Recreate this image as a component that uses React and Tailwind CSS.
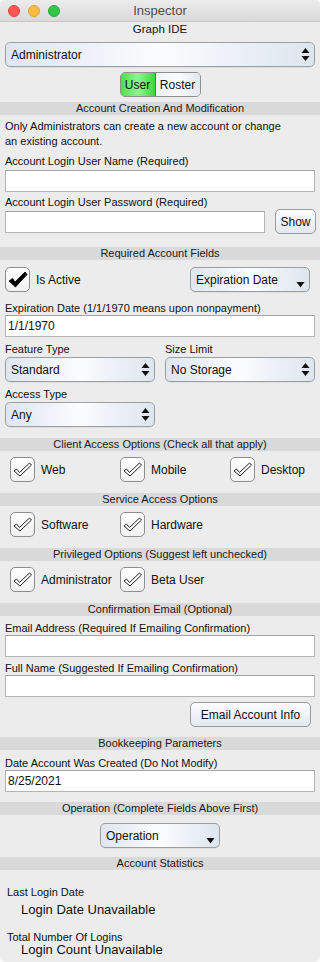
import React from 'react';

const FONT = { fontFamily: '"Liberation Sans", Arial, sans-serif' };

function UpDown() {
  return (
    <svg width="9" height="15" viewBox="0 0 9 15" className="shrink-0">
      <path d="M4.5 1 L8.5 6 L0.5 6 Z" fill="#111" />
      <path d="M0.5 9 L8.5 9 L4.5 14 Z" fill="#111" />
    </svg>
  );
}

function DownArrow() {
  return (
    <svg width="9" height="7" viewBox="0 0 9 7" className="shrink-0 mt-[9px]">
      <path d="M0.5 1 L8.5 1 L4.5 6.5 Z" fill="#111" />
    </svg>
  );
}

// popup button (up/down arrows) and pull-down (single arrow)
function Popup({ label, className = '', pulldown = false }) {
  return (
    <div
      className={`flex items-center justify-between h-[25px] rounded-[5px] border border-[#9d9d9d] bg-gradient-to-r from-[#dfe6f0] via-[#fbfcfe] to-[#dde5ef] pl-[5px] pr-[4px] shadow-[0_1px_0_rgba(0,0,0,0.05)] ${className}`}
    >
      <span className="text-[12px] text-[#111] leading-none">{label}</span>
      {pulldown ? <DownArrow /> : <UpDown />}
    </div>
  );
}

function Band({ children, className = '' }) {
  return (
    <div className={`-mx-[5px] h-[13px] bg-[#d9d9d9] text-center text-[11px] leading-[13px] text-[#1a1a1a] ${className}`}>
      {children}
    </div>
  );
}

function Label({ children, className = '' }) {
  return <div className={`text-[11px] leading-[14px] text-[#111] ${className}`}>{children}</div>;
}

function Input({ value = '', className = '' }) {
  return (
    <div className={`h-[22px] bg-white border border-[#b4b4b4] border-t-[#a4a4a4] pl-[2px] text-[12px] leading-[20px] text-[#111] ${className}`}>
      {value}
    </div>
  );
}

function Check({ filled = false }) {
  return (
    <div className="w-[25px] h-[25px] shrink-0 rounded-[5px] border border-[#8e8e8e] bg-gradient-to-b from-white to-[#f1f1f1] flex items-center justify-center">
      <svg width="21" height="19" viewBox="0 0 21 19">
        {filled ? (
          <path d="M2 11 L5.5 8.5 L8 12 L18 2 L20 4.5 L8.5 17 Z" fill="#000" stroke="#000" strokeWidth="0.8" strokeLinejoin="round" />
        ) : (
          <path d="M2 11 L4.5 9 L7.5 12.5 L17.5 3 L19.5 5 L8 16 Z" fill="#fff" stroke="#222" strokeWidth="1" strokeLinejoin="round" />
        )}
      </svg>
    </div>
  );
}

function CheckItem({ label, filled, className = '' }) {
  return (
    <div className={`flex items-center gap-[6px] ${className}`}>
      <Check filled={filled} />
      <span className="text-[12px] text-[#111]">{label}</span>
    </div>
  );
}

function Button({ children, className = '' }) {
  return (
    <div className={`h-[25px] rounded-[5px] border border-[#9a9a9a] bg-gradient-to-b from-[#fbfcfd] to-[#e3e9f1] flex items-center justify-center text-[12px] text-[#111] ${className}`}>
      {children}
    </div>
  );
}

export default function App() {
  return (
    <div style={FONT} className="w-[320px] h-[962px] bg-[#ececec] overflow-hidden rounded-[5px]">
      {/* Title bar */}
      <div className="relative h-[22px] bg-gradient-to-b from-[#ececec] to-[#d9d9d9] border-b border-[#c6c6c6] flex items-center justify-center">
        <div className="absolute left-[8px] top-[5px] flex gap-[8px]">
          <span className="w-[12px] h-[12px] rounded-full bg-[#fc5753] border border-[#df4744]" />
          <span className="w-[12px] h-[12px] rounded-full bg-[#fdbc40] border border-[#de9f34]" />
          <span className="w-[12px] h-[12px] rounded-full bg-[#33c748] border border-[#27aa35]" />
        </div>
        <span className="text-[13px] text-[#4d4d4d]">Inspector</span>
      </div>

      <div className="px-[5px]">
        <div className="text-center text-[11.5px] leading-[14px] text-[#111]">Graph IDE</div>
        <Popup label="Administrator" className="mt-[6px] h-[24px]" />

        {/* User / Roster segmented control */}
        <div className="flex justify-center mt-[5px]">
          <div className="flex h-[25px] rounded-[5px] border border-[#8f8f8f] overflow-hidden">
            <div className="w-[35px] flex items-center justify-center bg-gradient-to-r from-[#4fdc4f] via-[#8ff38f] to-[#3fd23f] border-r border-[#2f8f2f] text-[12px] text-[#111]">
              User
            </div>
            <div className="w-[44px] flex items-center justify-center bg-gradient-to-r from-[#eef2f7] via-[#fbfcfe] to-[#e2e8f0] text-[12px] text-[#111]">
              Roster
            </div>
          </div>
        </div>

        <Band className="mt-[5px]">Account Creation And Modification</Band>
        <div className="mt-[4px] text-[11px] leading-[15px] text-[#111]">
          Only Administrators can create a new account or change
          <br />
          an existing account.
        </div>
        <Label className="mt-[5px]">Account Login User Name (Required)</Label>
        <Input className="mt-[2px]" />
        <Label className="mt-[3px]">Account Login User Password (Required)</Label>
        <div className="flex items-center h-[25px]">
          <Input className="w-[260px]" />
          <Button className="ml-auto w-[41px] mr-[-1px]">Show</Button>
        </div>

        <Band className="mt-[13px]">Required Account Fields</Band>
        <div className="flex items-center mt-[7px]">
          <CheckItem label="Is Active" filled />
          <Popup label="Expiration Date" pulldown className="ml-auto mr-[5px] w-[120px]" />
        </div>
        <Label className="mt-[9px]">Expiration Date (1/1/1970 means upon nonpayment)</Label>
        <Input value="1/1/1970" />
        <div className="grid grid-cols-2 gap-x-[10px] mt-[5px]">
          <Label>Feature Type</Label>
          <Label>Size Limit</Label>
          <Popup label="Standard" className="mt-[1px]" />
          <Popup label="No Storage" className="mt-[1px]" />
        </div>
        <Label className="mt-[5px]">Access Type</Label>
        <Popup label="Any" className="mt-[1px] w-[150px]" />

        <Band className="mt-[11px]">Client Access Options (Check all that apply)</Band>
        <div className="flex mt-[6px] pl-[5px]">
          <CheckItem label="Web" className="w-[110px]" />
          <CheckItem label="Mobile" className="w-[110px]" />
          <CheckItem label="Desktop" />
        </div>

        <Band className="mt-[11px]">Service Access Options</Band>
        <div className="flex mt-[6px] pl-[5px]">
          <CheckItem label="Software" className="w-[110px]" />
          <CheckItem label="Hardware" />
        </div>

        <Band className="mt-[11px]">Privileged Options (Suggest left unchecked)</Band>
        <div className="flex mt-[6px] pl-[5px]">
          <CheckItem label="Administrator" className="w-[110px]" />
          <CheckItem label="Beta User" />
        </div>

        <Band className="mt-[11px]">Confirmation Email (Optional)</Band>
        <Label className="mt-[5px]">Email Address (Required If Emailing Confirmation)</Label>
        <Input />
        <Label className="mt-[4px]">Full Name (Suggested If Emailing Confirmation)</Label>
        <Input />
        <div className="flex justify-end mt-[5px] pr-[4px]">
          <Button className="w-[121px]">Email Account Info</Button>
        </div>

        <Band className="mt-[10px]">Bookkeeping Parameters</Band>
        <Label className="mt-[6px]">Date Account Was Created (Do Not Modify)</Label>
        <Input value="8/25/2021" />

        <Band className="mt-[10px]">Operation (Complete Fields Above First)</Band>
        <div className="flex justify-center mt-[8px]">
          <Popup label="Operation" pulldown className="w-[120px]" />
        </div>

        <Band className="mt-[9px]">Account Statistics</Band>
        <div className="pl-[2px]">
          <div className="mt-[16px] text-[11px] leading-[12px] text-[#111]">Last Login Date</div>
          <div className="mt-[4px] pl-[14px] text-[13px] leading-[16px] text-[#111]">Login Date Unavailable</div>
          <div className="mt-[13px] text-[11px] leading-[12px] text-[#111]">Total Number Of Logins</div>
          <div className="pl-[14px] text-[13px] leading-[14px] text-[#111]">Login Count Unavailable</div>
        </div>
      </div>
    </div>
  );
}
